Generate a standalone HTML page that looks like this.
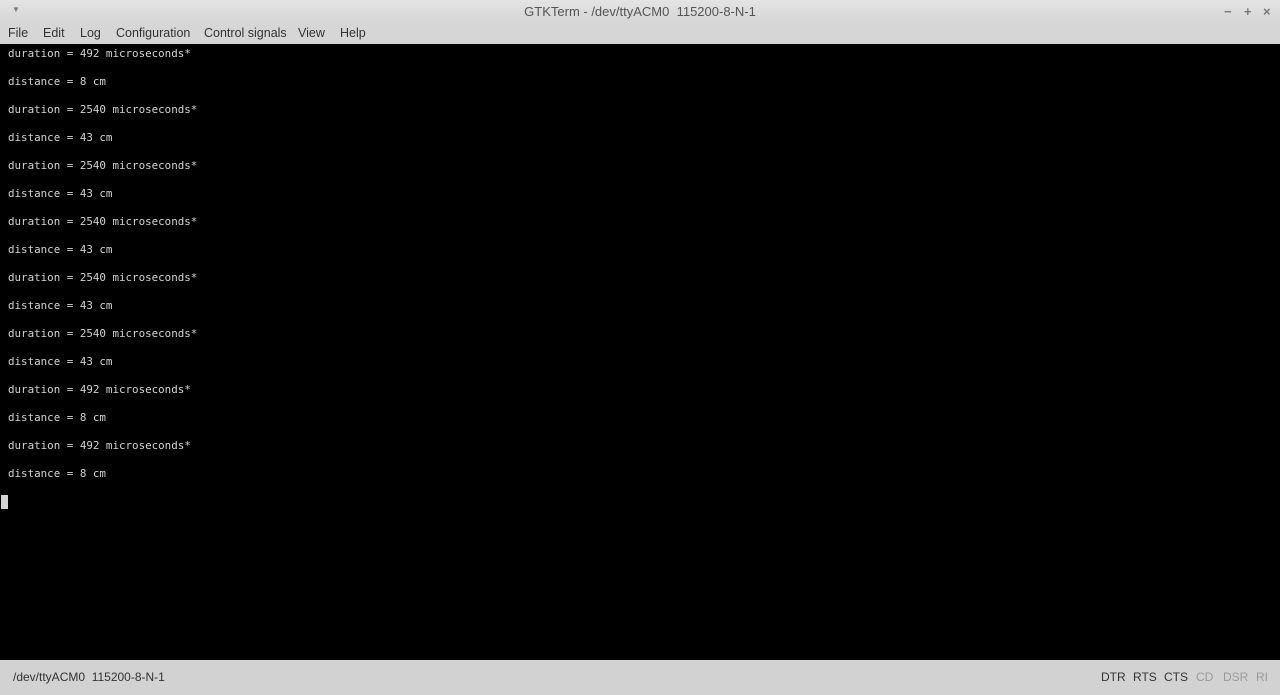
<!DOCTYPE html>
<html><head><style>
body{margin:0;width:1280px;height:695px;overflow:hidden;font-family:"Liberation Sans",sans-serif;background:#d4d4d4}
#title{position:absolute;top:0;left:0;width:1280px;height:22px;background:linear-gradient(#e4e4e4,#d6d6d6);font-size:13px;color:#555;text-align:center;line-height:23px}
#menu{position:absolute;top:22px;left:0;width:1280px;height:22px;background:#d6d6d6;font-size:12.5px;color:#333;line-height:22px}
#menu span{position:absolute}
#term{position:absolute;top:44px;left:0;width:1280px;height:616px;background:#000;color:#d3d3d3;font-family:"DejaVu Sans Mono","Liberation Mono",monospace;font-size:10.85px}
#term div{position:absolute;left:8px;white-space:pre}
#status{position:absolute;top:660px;left:0;width:1280px;height:35px;background:#d2d2d2;font-size:12px;color:#333;line-height:35px}
#status span{position:absolute}
.dim{color:#9a9a9a}
</style></head><body>
<div id="title"><span style="position:absolute;left:12px;top:-2px;font-size:8px;color:#777">▼</span>GTKTerm - /dev/ttyACM0&nbsp; 115200-8-N-1
<span style="position:absolute;left:1224px;color:#777;font-weight:bold">−</span><span style="position:absolute;left:1244px;color:#777;font-weight:bold">+</span><span style="position:absolute;left:1263px;color:#777;font-weight:bold">×</span></div>
<div id="menu"><span style="left:8px">File</span><span style="left:43px">Edit</span><span style="left:80px">Log</span><span style="left:116px">Configuration</span><span style="left:204px">Control signals</span><span style="left:298px">View</span><span style="left:340px">Help</span></div>
<div id="term">
<div style="top:3px">duration = 492 microseconds*</div>
<div style="top:31px">distance = 8 cm</div>
<div style="top:59px">duration = 2540 microseconds*</div>
<div style="top:87px">distance = 43 cm</div>
<div style="top:115px">duration = 2540 microseconds*</div>
<div style="top:143px">distance = 43 cm</div>
<div style="top:171px">duration = 2540 microseconds*</div>
<div style="top:199px">distance = 43 cm</div>
<div style="top:227px">duration = 2540 microseconds*</div>
<div style="top:255px">distance = 43 cm</div>
<div style="top:283px">duration = 2540 microseconds*</div>
<div style="top:311px">distance = 43 cm</div>
<div style="top:339px">duration = 492 microseconds*</div>
<div style="top:367px">distance = 8 cm</div>
<div style="top:395px">duration = 492 microseconds*</div>
<div style="top:423px">distance = 8 cm</div>
<span style="position:absolute;left:1px;top:451px;width:7px;height:14px;background:#d3d3d3"></span>
</div>
<div id="status"><span style="left:13px">/dev/ttyACM0&nbsp; 115200-8-N-1</span>
<span style="left:1101px">DTR</span><span style="left:1133px">RTS</span><span style="left:1164px">CTS</span><span class="dim" style="left:1196px">CD</span><span class="dim" style="left:1223px">DSR</span><span class="dim" style="left:1256px">RI</span></div>
</body></html>
